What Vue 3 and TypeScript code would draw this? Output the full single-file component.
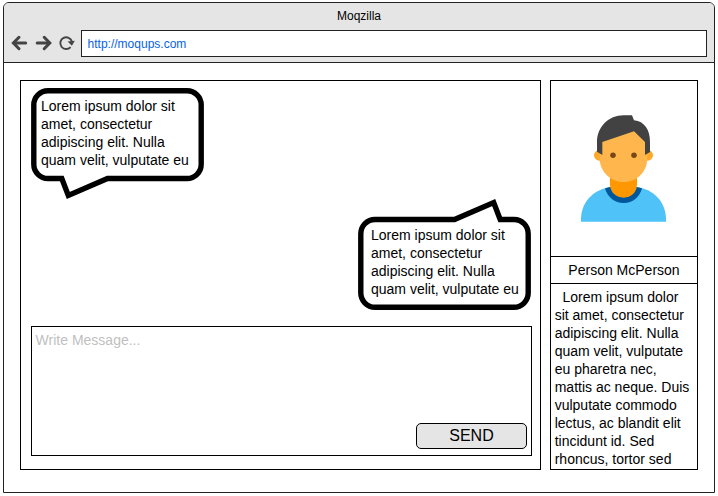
<script setup lang="ts">
import { ref } from 'vue'

interface Message {
  id: number
  own: boolean
  text: string
}

const url = ref<string>('http://moqups.com')
const draft = ref<string>('')
const messages: Message[] = [
  { id: 1, own: false, text: 'Lorem ipsum dolor sit amet, consectetur adipiscing elit. Nulla quam velit, vulputate eu' },
  { id: 2, own: true, text: 'Lorem ipsum dolor sit amet, consectetur adipiscing elit. Nulla quam velit, vulputate eu' },
]
const bio =
  'Lorem ipsum dolor sit amet, consectetur adipiscing elit. Nulla quam velit, vulputate eu pharetra nec, mattis ac neque. Duis vulputate commodo lectus, ac blandit elit tincidunt id. Sed rhoncus, tortor sed'
</script>

<template>
  <div class="window">
    <header class="chrome">
      <div class="title">Moqzilla</div>
      <div class="toolbar">
        <svg class="nav" viewBox="0 0 70 20" fill="none" stroke="#444">
          <g stroke-width="3" stroke-linecap="round">
            <path d="M15.7 10H4" />
            <path d="M9 4.3L3.4 10L9 15.7" />
            <path d="M27.2 10H39" />
            <path d="M34.2 4.3L39.8 10L34.2 15.7" />
          </g>
          <path d="M60.6 14.1A5.9 5.9 0 1 1 61.9 8.6" stroke-width="1.9" />
          <path d="M57.6 8.4l7.2-.6-2.9 5z" fill="#444" stroke="none" />
        </svg>
        <input v-model="url" class="url" type="text" spellcheck="false" />
      </div>
    </header>

    <main class="content">
      <section class="chat">
        <div v-for="m in messages" :key="m.id" class="bubble" :class="{ own: m.own }">
          <svg class="outline" viewBox="0 0 173 111">
            <path
              d="M17 2.8H156A14.2 14.2 0 0 1 170.2 17V76.3A14.2 14.2 0 0 1 156 90.5H76.5L37.3 107.4L30.8 90.5H17A14.2 14.2 0 0 1 2.8 76.3V17A14.2 14.2 0 0 1 17 2.8Z"
              fill="#fff"
              stroke="#000"
              stroke-width="5.4"
            />
          </svg>
          <p class="words">{{ m.text }}</p>
        </div>
        <form class="composer" @submit.prevent="draft = ''">
          <textarea v-model="draft" class="draft" placeholder="Write Message..."></textarea>
          <button class="send" type="submit">SEND</button>
        </form>
      </section>

      <aside class="profile">
        <svg class="avatar" viewBox="18 15 438 525">
          <path d="M108 437v-10C110 373 150 339 198 333h76c50 6 87 42 89 94v10z" fill="#4fc3f7" />
          <path d="M180 337l15-4h80l16 4c-7 27-28 44-55 44s-49-17-56-44z" fill="#01579b" />
          <path d="M195 295h81v30c0 25-18 40-40 40s-41-15-41-40z" fill="#ff9800" />
          <circle cx="163" cy="238" r="16" fill="#ffa726" />
          <circle cx="308" cy="238" r="16" fill="#ffa726" />
          <path d="M164 180l100-30 43 30v66c0 42-32 72-71 72s-72-30-72-72z" fill="#ffb74d" />
          <path d="M236 118h25l6 15c32 3 48 29 48 65v30l-15 9v-39l-33-32-95 32v39l-16-10v-29c0-44 34-80 80-80z" fill="#424242" />
          <circle cx="204" cy="238" r="8.3" fill="#784719" />
          <circle cx="267" cy="238" r="8.3" fill="#784719" />
        </svg>
        <h2 class="name">Person McPerson</h2>
        <p class="bio">{{ bio }}</p>
      </aside>
    </main>
  </div>
</template>

<style>
body {
  background: #fff;
}
</style>

<style scoped>
* {
  box-sizing: border-box;
}

.window {
  display: flex;
  flex-direction: column;
  width: 712px;
  height: 491px;
  margin: 2px 0 0 3px;
  border: 1px solid #222;
  border-radius: 6px 6px 0 0;
  overflow: hidden;
  background: #fff;
  color: #000;
  font-family: 'Liberation Sans', Arial, sans-serif;
  font-size: 14px;
  line-height: 18px;
}

.chrome {
  height: 60px;
  flex: none;
  border-bottom: 1px solid #222;
  background: #e5e5e5;
}

.title {
  height: 27px;
  font-size: 12px;
  line-height: 27px;
  text-align: center;
}

.toolbar {
  display: flex;
  gap: 1px;
  padding: 0 7px 0 6px;
}

.nav {
  width: 70px;
  height: 20px;
  margin-top: 3px;
  flex: none;
}

.url {
  flex: 1;
  min-width: 0;
  height: 27px;
  padding: 0 5.6px;
  border: 1px solid #222;
  border-radius: 0;
  outline: none;
  background: #fff;
  color: #0662e6;
  font: 12px 'Liberation Sans', Arial, sans-serif;
}

.content {
  display: flex;
  gap: 9px;
  padding: 17px 16px 0;
}

.chat {
  display: flex;
  flex-direction: column;
  width: 521px;
  height: 390px;
  padding: 7px 8px 13px 10px;
  border: 1px solid #000;
}

.bubble {
  position: relative;
  width: 173px;
  height: 111px;
  flex: none;
}

.bubble.own {
  align-self: flex-end;
  margin-right: 1px;
}

.outline {
  position: absolute;
  inset: 0;
  width: 173px;
  height: 111px;
}

.own .outline {
  transform: rotate(180deg);
}

.words {
  position: relative;
  margin: 0;
  padding: 9px 12px 0 10px;
}

.own .words {
  padding: 27px 9px 0 13px;
}

.composer {
  display: flex;
  flex-direction: column;
  align-items: flex-end;
  width: 501px;
  height: 130px;
  margin-top: auto;
  padding: 0 4px 6px 0;
  border: 1px solid #000;
}

.draft {
  flex: 1;
  align-self: stretch;
  min-height: 0;
  padding: 4px 3.6px;
  border: 0;
  outline: none;
  resize: none;
  background: transparent;
  font: 14px/18px 'Liberation Sans', Arial, sans-serif;
}

.draft::placeholder {
  color: #bfbfbf;
}

.send {
  width: 111px;
  height: 26px;
  padding: 0;
  border: 1px solid #000;
  border-radius: 5px;
  background: #e5e5e5;
  color: #000;
  font: 16px/24px 'Liberation Sans', Arial, sans-serif;
}

.profile {
  display: flex;
  flex-direction: column;
  width: 148px;
  height: 390px;
  border: 1px solid #000;
}

.avatar {
  width: 146px;
  height: 175px;
  flex: none;
}

.name {
  height: 28px;
  margin: 0;
  border: solid #000;
  border-width: 1px 0;
  font-size: 14px;
  font-weight: 400;
  line-height: 26px;
  text-align: center;
}

.bio {
  margin: 0;
  padding: 4px 4px 0 3.7px;
  text-indent: 7.8px;
}
</style>
